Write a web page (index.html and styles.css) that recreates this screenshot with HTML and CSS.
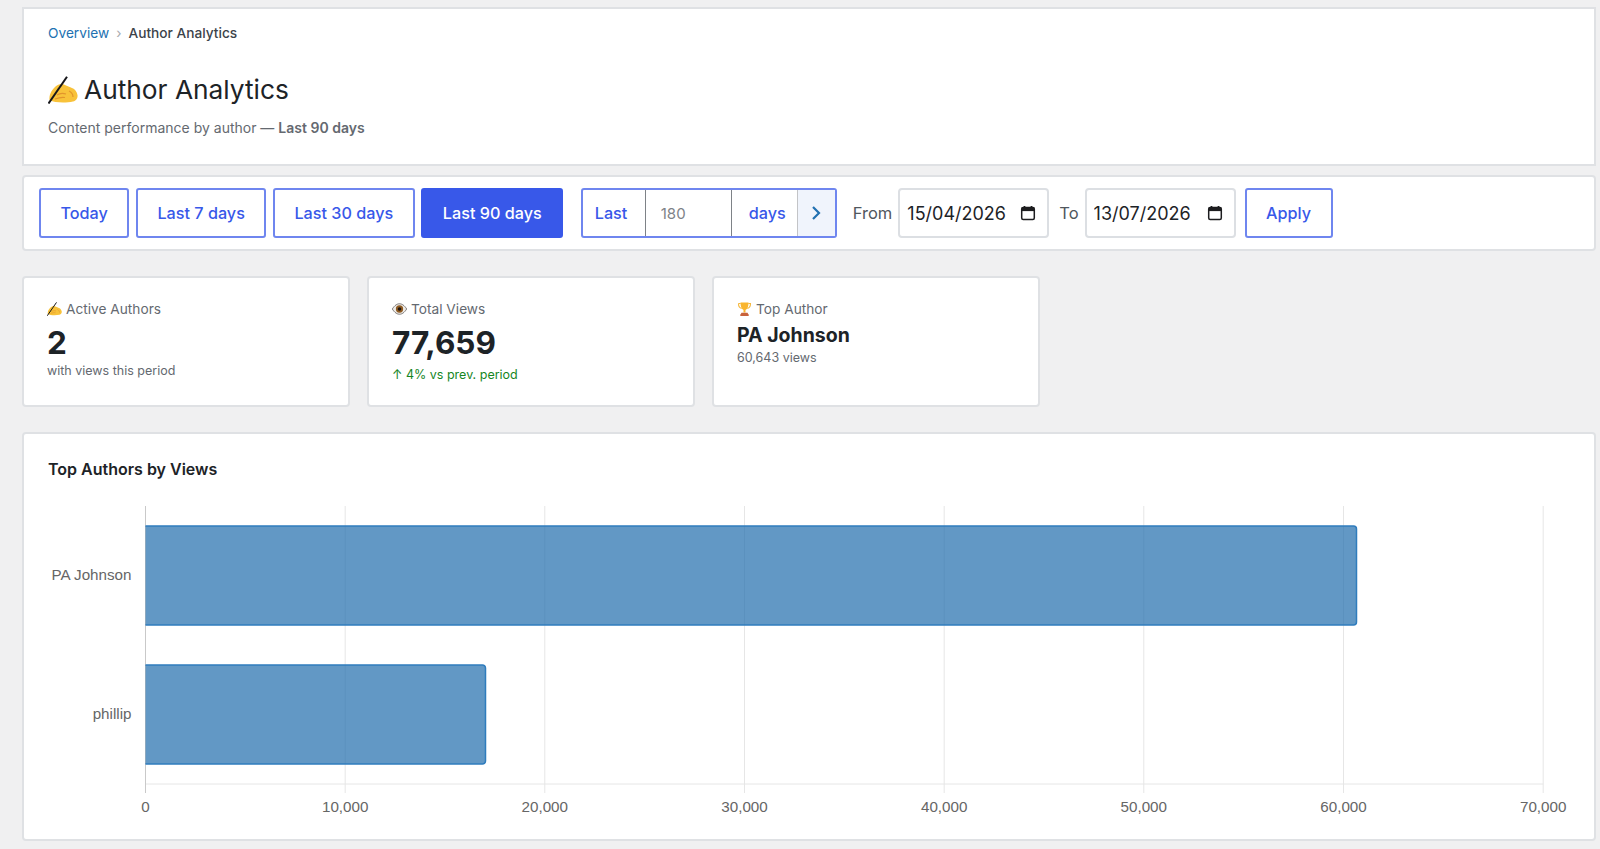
FILE: index.html
```html
<!DOCTYPE html>
<html lang="en">
<head>
  <meta charset="UTF-8">
  <title>Author Analytics</title>
  <link rel="stylesheet" href="styles.css">
</head>
<body>
  <svg class="defs" width="0" height="0" aria-hidden="true">
    <symbol id="icon-hand" viewBox="0 0 30 28">
      <path d="M1.500 24C1 19 3 15 7 11c3-3 7-4 10-2 2 1 5 2 7 3 3 1 5 4 5.500 7 .5 3-1.500 6-4.500 6.500C18 27 7 27 1.500 24z" fill="#f8c23a"/>
      <path d="M9 19c3-2 6-2 9-1M7 23c4-1.500 7-2 10-1.500M21 15c2 1 4 3 4 6" fill="none" stroke="#e2952c" stroke-width="1.200"/>
      <path d="M.5 27.500 19 .8" fill="none" stroke="#16161a" stroke-width="2"/>
    </symbol>
    <symbol id="icon-eye" viewBox="0 0 14 11">
      <path d="M.3 5.500C2.500 2 4.800.6 7 .6s4.500 1.400 6.700 4.900C11.500 9 9.200 10.400 7 10.400S2.500 9 .3 5.500z" fill="#eeebe7" stroke="#6a6663" stroke-width=".8"/>
      <circle cx="7" cy="5.500" r="3.400" fill="#8f5c24"/>
      <circle cx="7" cy="5.500" r="1.700" fill="#1c1410"/>
    </symbol>
    <symbol id="icon-trophy" viewBox="0 0 14 14">
      <path d="M1 1.500h2.200M10.800 1.500H13c0 3-1.200 4.500-3.200 5M1 1.500c0 3 1.200 4.500 3.200 5" fill="none" stroke="#f5b73a" stroke-width="1.100"/>
      <path d="M3 .5h8c0 4-1 6.500-3 7.500v2.500H6V8C4 7 3 4.500 3 .5z" fill="#f9b52e"/>
      <path d="M4 10.800h6l.8 1.400H3.200zM2.800 12.200h8.400V14H2.800z" fill="#c8633c"/>
    </symbol>
    <symbol id="icon-calendar" viewBox="0 0 16 16">
      <path d="M4.500 1v2M11.500 1v2" stroke="#1d1d1f" stroke-width="1.700" fill="none"/>
      <rect x="1.700" y="2.500" width="12.600" height="12" rx="1.500" fill="none" stroke="#1d1d1f" stroke-width="1.500"/>
      <rect x="1.700" y="2.500" width="12.600" height="3.600" fill="#1d1d1f"/>
    </symbol>
  </svg>

  <header class="panel page-head">
    <nav class="crumbs">
      <a href="#">Overview</a>
      <span class="crumb-sep">›</span>
      <span>Author Analytics</span>
    </nav>
    <h1><svg class="emoji-title"><use href="#icon-hand"/></svg> Author Analytics</h1>
    <p class="page-sub">Content performance by author — <b>Last 90 days</b></p>
  </header>

  <div class="panel toolbar">
    <a class="range-btn" href="#">Today</a>
    <a class="range-btn" href="#">Last 7 days</a>
    <a class="range-btn" href="#">Last 30 days</a>
    <a class="range-btn active" href="#">Last 90 days</a>
    <form class="custom-range">
      <span class="cr-last">Last</span>
      <input class="cr-num" type="text" value="180">
      <span class="cr-days">days</span>
      <button class="cr-go" type="button">
        <svg width="10" height="16" viewBox="0 0 10 16"><path d="M2 2l6 6-6 6" fill="none" stroke="#2271b1" stroke-width="2.200"/></svg>
      </button>
    </form>
    <label class="date-label label-from">From</label>
    <div class="date-field">
      <input type="text" value="15/04/2026">
      <svg class="cal"><use href="#icon-calendar"/></svg>
    </div>
    <label class="date-label label-to">To</label>
    <div class="date-field">
      <input type="text" value="13/07/2026">
      <svg class="cal"><use href="#icon-calendar"/></svg>
    </div>
    <a class="range-btn btn-apply" href="#">Apply</a>
  </div>

  <section class="stats">
    <div class="stat-card">
      <div class="stat-label"><svg class="emoji-sm"><use href="#icon-hand"/></svg> Active Authors</div>
      <div class="stat-value">2</div>
      <div class="stat-note">with views this period</div>
    </div>
    <div class="stat-card">
      <div class="stat-label"><svg class="emoji-sm"><use href="#icon-eye"/></svg> Total Views</div>
      <div class="stat-value">77,659</div>
      <div class="stat-note stat-up">↑ 4% vs prev. period</div>
    </div>
    <div class="stat-card">
      <div class="stat-label"><svg class="emoji-sm"><use href="#icon-trophy"/></svg> Top Author</div>
      <div class="stat-name">PA Johnson</div>
      <div class="stat-note">60,643 views</div>
    </div>
  </section>

  <section class="panel chart-card">
    <h2>Top Authors by Views</h2>
    <svg class="chart" viewBox="0 0 1522 320" width="1522" height="320">
      <g class="grid">
        <path d="M297.200 6V293M496.800 6V293M696.500 6V293M896.200 6V293M1095.800 6V293M1295.500 6V293M1495.200 6V293"/>
        <path d="M97.500 284H1495.200"/>
      </g>
      <path class="axis" d="M97.500 6V293"/>
      <path class="bar" d="M97.500 26H1305.500a3 3 0 0 1 3 3V122a3 3 0 0 1-3 3H97.500"/>
      <path class="bar" d="M97.500 165H434.500a3 3 0 0 1 3 3V261a3 3 0 0 1-3 3H97.500"/>
      <text class="y-label" x="83.500" y="80">PA Johnson</text>
      <text class="y-label" x="83.500" y="219">phillip</text>
      <text class="x-label" x="97.500" y="312">0</text>
      <text class="x-label" x="297.200" y="312">10,000</text>
      <text class="x-label" x="496.800" y="312">20,000</text>
      <text class="x-label" x="696.500" y="312">30,000</text>
      <text class="x-label" x="896.200" y="312">40,000</text>
      <text class="x-label" x="1095.800" y="312">50,000</text>
      <text class="x-label" x="1295.500" y="312">60,000</text>
      <text class="x-label" x="1495.200" y="312">70,000</text>
    </svg>
  </section>
</body>
</html>
```
FILE: styles.css
```css
* {
  box-sizing: border-box;
}

html, body {
  margin: 0;
  padding: 0;
}

body {
  background: #f0f0f1;
  color: #1d2327;
  font-family: Inter, "Liberation Sans", sans-serif;
  padding: 7px 4px 8px 22px;
  overflow: hidden;
}

.defs {
  position: absolute;
}

.panel {
  background: #fff;
  border: 2px solid #dfe1e4;
}

/* page header */
.page-head {
  height: 159px;
  padding: 14px 24px 0;
}

.crumbs {
  display: flex;
  align-items: center;
  font-size: 13.700px;
  line-height: 20px;
  font-weight: 500;
  color: #3c434a;
}

.crumbs a {
  color: #2271b1;
  font-weight: 400;
  text-decoration: none;
}

.crumb-sep {
  color: #a7aaad;
  margin: 0 7px;
  font-weight: 400;
}

h1 {
  margin: 27px 0 0;
  font-size: 26.300px;
  line-height: 40px;
  font-weight: 400;
  display: flex;
  align-items: center;
  gap: 6px;
}

.emoji-title {
  width: 30px;
  height: 28px;
}

.page-sub {
  margin: 8px 0 0;
  font-size: 14px;
  line-height: 20px;
  color: #646970;
}

.page-sub b {
  font-weight: 600;
}

/* toolbar */
.toolbar {
  height: 76px;
  margin-top: 9px;
  padding: 0 15px;
  border-radius: 4px;
  display: flex;
  align-items: center;
}

.range-btn {
  display: flex;
  align-items: center;
  height: 50px;
  padding: 0 19.500px;
  margin-right: 6.600px;
  border: 2px solid #6f86ef;
  border-radius: 3px;
  background: #fff;
  color: #3858e9;
  font-size: 16.200px;
  font-weight: 500;
  text-decoration: none;
}

.range-btn.active {
  background: #3858e9;
  border-color: #3858e9;
  color: #fff;
}

.custom-range {
  display: flex;
  align-items: stretch;
  height: 50px;
  margin-left: 11px;
  border: 2px solid #6f86ef;
  border-radius: 3px;
  color: #3858e9;
  font-size: 16.200px;
  font-weight: 500;
}

.cr-last {
  width: 63px;
  padding-left: 12px;
  line-height: 46px;
  border-right: 1px solid #7e8287;
}

.cr-num {
  width: 86px;
  padding: 0 0 0 15px;
  border: 0;
  border-right: 1px solid #7e8287;
  outline: none;
  font: 400 15px Inter, "Liberation Sans", sans-serif;
  color: #7e8287;
}

.cr-days {
  width: 66px;
  padding-left: 17px;
  line-height: 46px;
  border-right: 1px solid #c3c4c7;
}

.cr-go {
  width: 37px;
  padding: 3px 0 0;
  border: 0;
  background: #f0f4fc;
}

.date-label {
  font-size: 16.500px;
  color: #50575e;
}

.label-from {
  margin-left: 16px;
}

.label-to {
  margin-left: 10px;
}

.date-field {
  display: flex;
  align-items: center;
  width: 151px;
  height: 50px;
  margin-left: 6px;
  padding: 0 11px 0 7px;
  border: 2px solid #dcdfe3;
  border-radius: 4px;
}

.date-field input {
  width: 112px;
  padding: 0;
  border: 0;
  outline: none;
  font: 400 18px Inter, "Liberation Sans", sans-serif;
  color: #1d2327;
}

.cal {
  width: 16px;
  height: 16px;
  margin-left: auto;
}

.btn-apply {
  margin: 0 0 0 9px;
}

/* stat cards */
.stats {
  display: flex;
  gap: 17px;
  margin-top: 25px;
}

.stat-card {
  width: 328px;
  height: 131px;
  padding: 21px 23px;
  background: #fff;
  border: 2px solid #dfe1e4;
  border-radius: 4px;
}

.stat-label {
  display: flex;
  align-items: center;
  gap: 4px;
  font-size: 13.700px;
  line-height: 20px;
  color: #646970;
}

.emoji-sm {
  width: 15px;
  height: 14px;
}

.stat-value {
  margin-top: 4px;
  font-size: 31.500px;
  line-height: 39px;
  font-weight: 700;
}

.stat-note {
  font-size: 12.500px;
  line-height: 18px;
  color: #646970;
}

.stat-up {
  margin-top: 4px;
  color: #16861f;
}

.stat-name {
  margin-top: 2px;
  font-size: 19.500px;
  line-height: 28px;
  font-weight: 700;
}

/* chart */
.chart-card {
  height: 409px;
  margin-top: 25px;
  padding: 24px 24px 0;
  border-radius: 4px;
}

h2 {
  margin: 0;
  font-size: 16px;
  line-height: 22px;
  font-weight: 600;
}

.chart {
  display: block;
  margin-top: 20px;
}

.grid path {
  fill: none;
  stroke: #e6e6e6;
  stroke-width: 1;
}

.axis {
  fill: none;
  stroke: #c9c9c9;
  stroke-width: 1;
}

.bar {
  fill: rgba(32, 108, 172, 0.7);
  stroke: #2f7cbd;
  stroke-width: 1.500;
}

.y-label,
.x-label {
  font-family: "Liberation Sans", Arial, sans-serif;
  font-size: 15.200px;
  fill: #666;
}

.y-label {
  text-anchor: end;
}

.x-label {
  text-anchor: middle;
}
```
